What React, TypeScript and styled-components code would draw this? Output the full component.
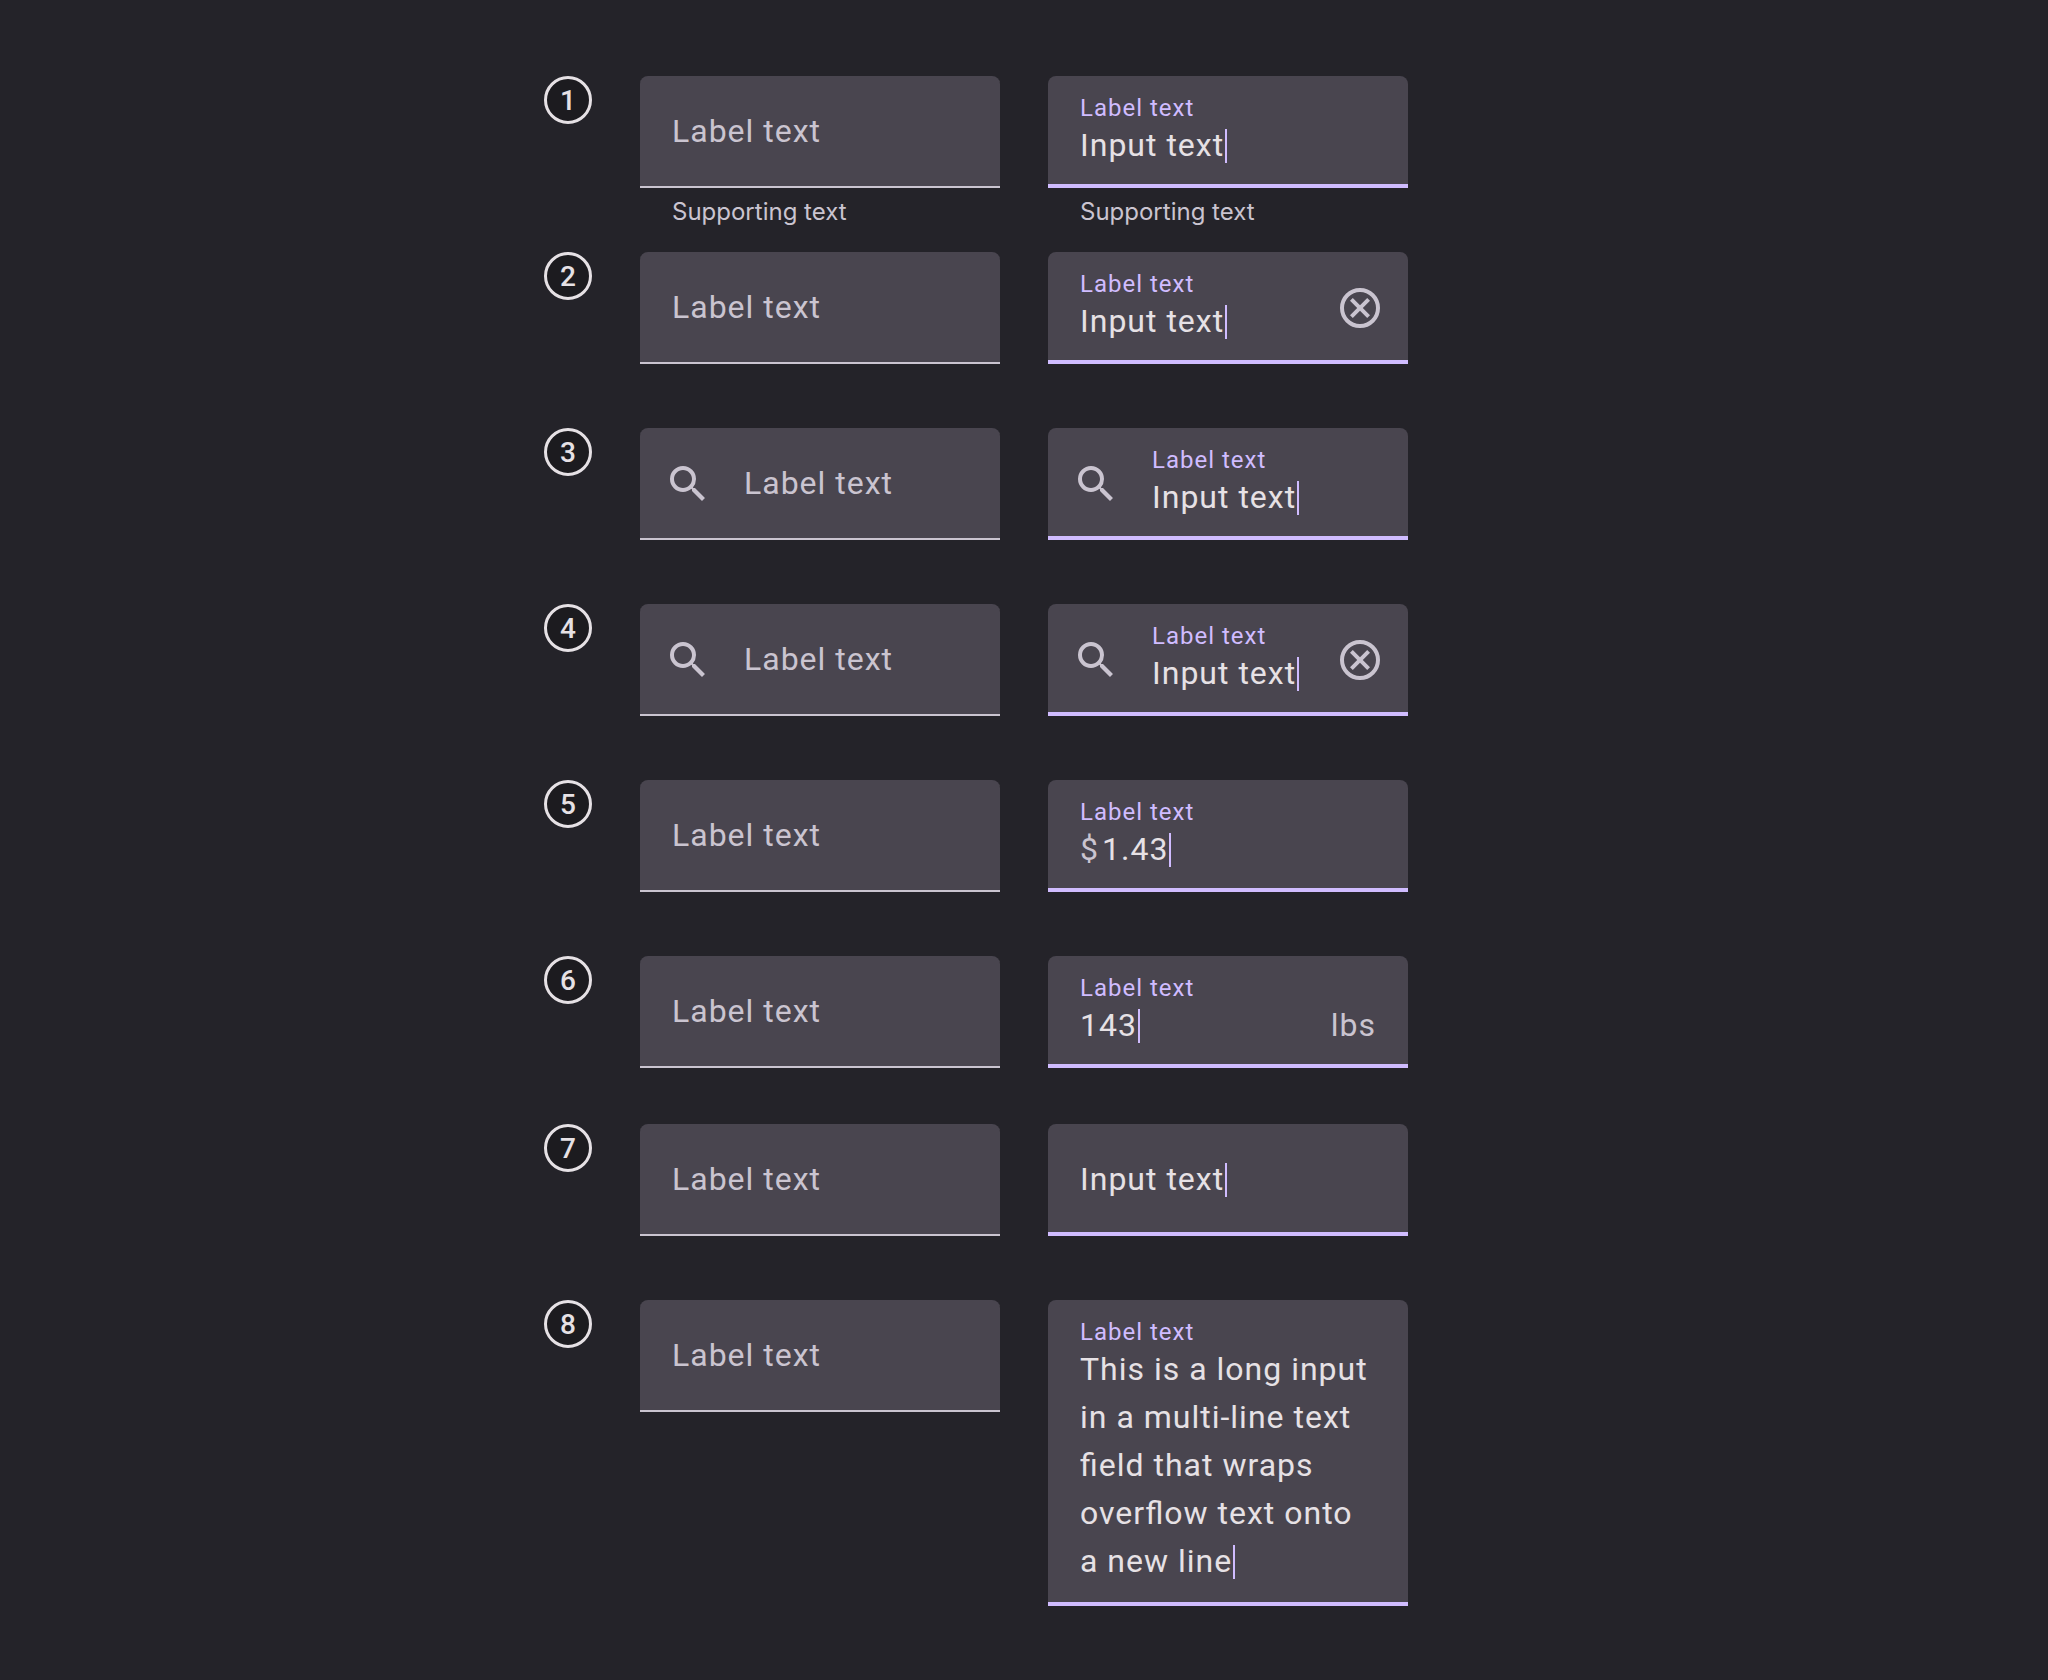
import React, { useId, useLayoutEffect, useRef, useState } from "react";
import styled, { createGlobalStyle, css } from "styled-components";

const color = {
  page: "#242329",
  badge: "#1c1b1f",
  field: "#49454f",
  muted: "#cac4d0",
  text: "#e6e1e5",
  primary: "#d0bcff",
};

const GlobalStyle = createGlobalStyle`
  *, *::before, *::after { box-sizing: border-box; }
  body {
    margin: 0;
    min-height: 100vh;
    background: ${color.page};
    color: ${color.text};
    font-family: Roboto, "Liberation Sans", sans-serif;
  }
`;

const bodyLarge = css`
  font-family: inherit;
  font-size: 32px;
  line-height: 48px;
  letter-spacing: 1px;
  font-feature-settings: "liga" 1;
`;

const Page = styled.main`
  display: flex;
  flex-direction: column;
  gap: 24px;
  padding: 76px 48px;
`;

const Row = styled.section<{ $compact?: boolean }>`
  display: grid;
  grid-template-columns: 48px minmax(0, 360px) minmax(0, 360px) 48px;
  column-gap: 48px;
  justify-content: center;
  align-items: start;
  min-height: ${(p) => (p.$compact ? 144 : 152)}px;
`;

const Badge = styled.span`
  display: flex;
  align-items: center;
  justify-content: center;
  width: 48px;
  height: 48px;
  padding-top: 2px;
  border: 3px solid ${color.text};
  border-radius: 50%;
  background: ${color.badge};
  font-size: 28px;
  font-weight: 500;
  line-height: 32px;
`;

const Container = styled.div<{ $active?: boolean; $leading?: boolean; $trailing?: boolean }>`
  display: flex;
  align-items: center;
  gap: 32px;
  min-height: 112px;
  padding-left: ${(p) => (p.$leading ? 24 : 32)}px;
  padding-right: ${(p) => (p.$trailing ? 24 : 32)}px;
  border-radius: 8px 8px 0 0;
  background: ${color.field};
  box-shadow: inset 0 ${(p) => (p.$active ? `-4px ${color.primary}` : `-2px ${color.muted}`)};
`;

const Body = styled.div<{ $floating?: boolean; $multiline?: boolean }>`
  display: flex;
  flex: 1;
  flex-direction: column;
  min-width: 0;
  padding-top: ${(p) => (p.$floating ? 19 : 0)}px;
  padding-bottom: ${(p) => (p.$multiline ? 21 : p.$floating ? 19 : 2)}px;
`;

const FloatingLabel = styled.label`
  color: ${color.primary};
  font-size: 24px;
  line-height: 26px;
  letter-spacing: 1px;
`;

const Line = styled.div`
  display: flex;
  align-items: flex-start;
  position: relative;
`;

const RestingInput = styled.input`
  ${bodyLarge}
  width: 100%;
  height: 48px;
  padding: 0;
  border: 0;
  outline: 0;
  background: transparent;
  color: ${color.text};
  &::placeholder {
    color: ${color.muted};
    opacity: 1;
  }
`;

const ActiveInput = styled.input`
  ${bodyLarge}
  field-sizing: content;
  min-width: 0;
  height: 48px;
  padding: 0;
  border: 0;
  outline: 0;
  background: transparent;
  color: ${color.text};
`;

const TextArea = styled.textarea`
  ${bodyLarge}
  display: block;
  width: 100%;
  padding: 0;
  border: 0;
  outline: 0;
  resize: none;
  overflow: hidden;
  background: transparent;
  color: ${color.text};
`;

const Caret = styled.span`
  flex: none;
  width: 2px;
  height: 34px;
  margin: 8px 0 0 1px;
  background: ${color.primary};
`;

const FloatingCaret = styled(Caret)`
  position: absolute;
`;

const Prefix = styled.span`
  ${bodyLarge}
  margin-right: 3px;
  color: ${color.muted};
`;

const Suffix = styled.span`
  ${bodyLarge}
  margin-left: auto;
  color: ${color.muted};
`;

const Supporting = styled.p`
  margin: 8px 0 0;
  padding: 0 32px;
  color: ${color.muted};
  font-family: Inter, Roboto, sans-serif;
  font-size: 24px;
  font-weight: 400;
  line-height: 32px;
`;

const Glyph = styled.svg`
  flex: none;
  width: 48px;
  height: 48px;
  color: ${color.muted};
`;

const ClearButton = styled.button`
  display: flex;
  flex: none;
  padding: 0;
  border: 0;
  background: transparent;
  cursor: pointer;
`;

const SearchIcon = () => (
  <Glyph viewBox="0 0 24 24" fill="currentColor" aria-hidden="true">
    <path d="M15.5 14h-.79l-.28-.27A6.471 6.471 0 0 0 16 9.5 6.5 6.5 0 1 0 9.5 16c1.61 0 3.09-.59 4.23-1.57l.27.28v.79l5 4.99L20.49 19l-4.99-5zm-6 0C7.01 14 5 11.99 5 9.5S7.01 5 9.5 5 14 7.01 14 9.5 11.99 14 9.5 14z" />
  </Glyph>
);

const CancelIcon = () => (
  <Glyph viewBox="0 0 24 24" aria-hidden="true">
    <circle cx="12" cy="12" r="9" fill="none" stroke="currentColor" strokeWidth="2" />
    <path
      fill="currentColor"
      d="M8.4 17 12 13.4 15.6 17 17 15.6 13.4 12 17 8.4 15.6 7 12 10.6 8.4 7 7 8.4 10.6 12 7 15.6z"
    />
  </Glyph>
);

function RestingField({ search, supporting }: { search?: boolean; supporting?: string }) {
  return (
    <div>
      <Container $leading={search}>
        {search && <SearchIcon />}
        <Body>
          <RestingInput type="text" placeholder="Label text" aria-label="Label text" />
        </Body>
      </Container>
      {supporting && <Supporting>{supporting}</Supporting>}
    </div>
  );
}

type ActiveProps = {
  initial: string;
  hideLabel?: boolean;
  search?: boolean;
  clear?: boolean;
  prefix?: string;
  suffix?: string;
  supporting?: string;
};

function ActiveField({ initial, hideLabel, search, clear, prefix, suffix, supporting }: ActiveProps) {
  const id = useId();
  const [value, setValue] = useState(initial);
  return (
    <div>
      <Container $active $leading={search} $trailing={clear}>
        {search && <SearchIcon />}
        <Body $floating={!hideLabel}>
          {!hideLabel && <FloatingLabel htmlFor={id}>Label text</FloatingLabel>}
          <Line>
            {prefix && <Prefix>{prefix}</Prefix>}
            <ActiveInput
              id={id}
              type="text"
              value={value}
              aria-label={hideLabel ? "Input text" : undefined}
              onChange={(e) => setValue(e.target.value)}
            />
            <Caret />
            {suffix && <Suffix>{suffix}</Suffix>}
          </Line>
        </Body>
        {clear && (
          <ClearButton type="button" aria-label="Clear" onClick={() => setValue("")}>
            <CancelIcon />
          </ClearButton>
        )}
      </Container>
      {supporting && <Supporting>{supporting}</Supporting>}
    </div>
  );
}

// Finds where the text ends inside a textarea by laying it out in a throwaway block.
function endOfText(area: HTMLTextAreaElement) {
  const style = getComputedStyle(area);
  const probe = document.createElement("div");
  probe.style.cssText = "position:absolute;visibility:hidden;white-space:pre-wrap;overflow-wrap:break-word";
  probe.style.width = `${area.clientWidth}px`;
  probe.style.fontFamily = style.fontFamily;
  probe.style.fontSize = style.fontSize;
  probe.style.lineHeight = style.lineHeight;
  probe.style.letterSpacing = style.letterSpacing;
  probe.style.fontFeatureSettings = style.fontFeatureSettings;
  probe.textContent = area.value;
  const end = document.createElement("span");
  probe.appendChild(end);
  document.body.appendChild(probe);
  const outer = probe.getBoundingClientRect();
  const rect = end.getBoundingClientRect();
  const line = parseFloat(style.lineHeight);
  const left = Math.round(rect.left - outer.left);
  const top = Math.floor((rect.top - outer.top) / line) * line;
  probe.remove();
  return { left, top };
}

function MultilineField({ initial }: { initial: string }) {
  const id = useId();
  const ref = useRef<HTMLTextAreaElement>(null);
  const [value, setValue] = useState(initial);
  const [caret, setCaret] = useState({ left: 0, top: 0 });

  useLayoutEffect(() => {
    const place = () => ref.current && setCaret(endOfText(ref.current));
    place();
    document.fonts?.ready.then(place);
    window.addEventListener("resize", place);
    return () => window.removeEventListener("resize", place);
  }, [value]);

  return (
    <Container $active>
      <Body $floating $multiline>
        <FloatingLabel htmlFor={id}>Label text</FloatingLabel>
        <Line>
          <TextArea id={id} ref={ref} rows={5} value={value} onChange={(e) => setValue(e.target.value)} />
          <FloatingCaret style={caret} />
        </Line>
      </Body>
    </Container>
  );
}

export default function App() {
  return (
    <>
      <GlobalStyle />
      <Page>
        <Row>
          <Badge>1</Badge>
          <RestingField supporting="Supporting text" />
          <ActiveField initial="Input text" supporting="Supporting text" />
        </Row>
        <Row>
          <Badge>2</Badge>
          <RestingField />
          <ActiveField initial="Input text" clear />
        </Row>
        <Row>
          <Badge>3</Badge>
          <RestingField search />
          <ActiveField initial="Input text" search />
        </Row>
        <Row>
          <Badge>4</Badge>
          <RestingField search />
          <ActiveField initial="Input text" search clear />
        </Row>
        <Row>
          <Badge>5</Badge>
          <RestingField />
          <ActiveField initial="1.43" prefix="$" />
        </Row>
        <Row $compact>
          <Badge>6</Badge>
          <RestingField />
          <ActiveField initial="143" suffix="lbs" />
        </Row>
        <Row>
          <Badge>7</Badge>
          <RestingField />
          <ActiveField initial="Input text" hideLabel />
        </Row>
        <Row>
          <Badge>8</Badge>
          <RestingField />
          <MultilineField initial="This is a long input in a multi-line text field that wraps overflow text onto a new line" />
        </Row>
      </Page>
    </>
  );
}
